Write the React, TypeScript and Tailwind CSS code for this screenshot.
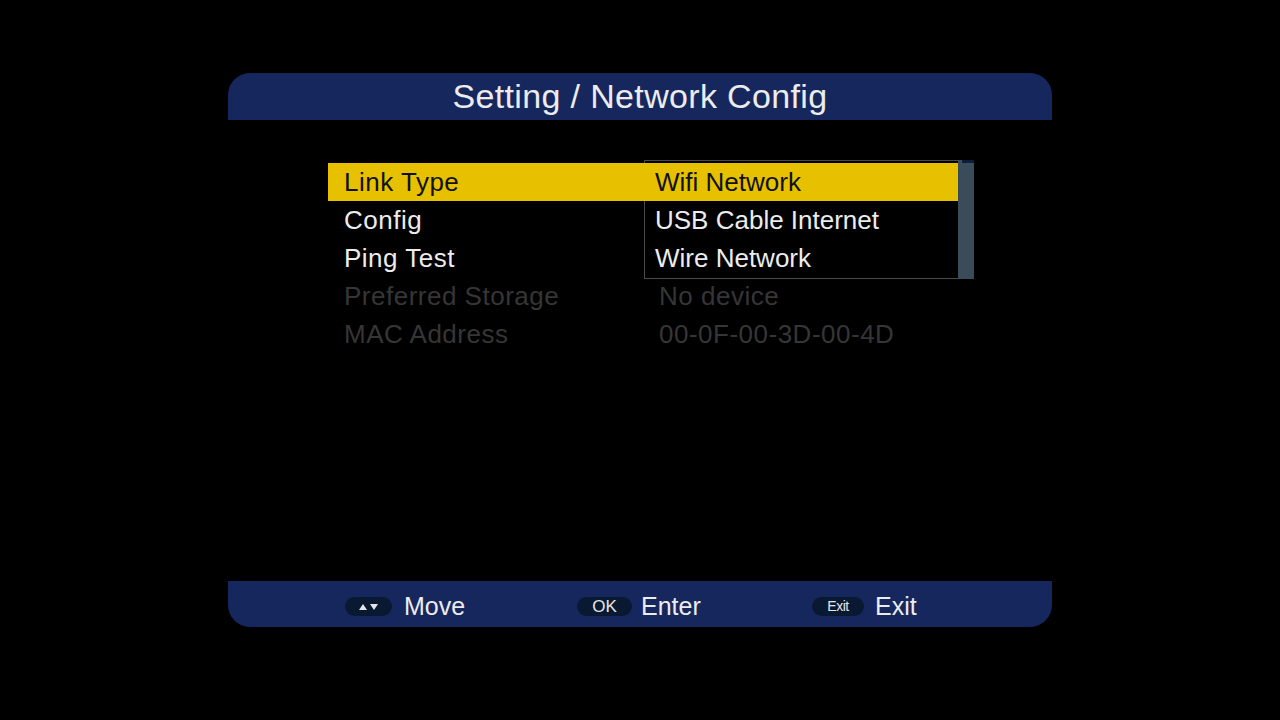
import React from "react";

interface MenuRow {
  label: string;
  value: string;
  disabled?: boolean;
  active?: boolean;
}

const rows: MenuRow[] = [
  { label: "Link Type", value: "", active: true },
  { label: "Config", value: "" },
  { label: "Ping Test", value: "" },
  { label: "Preferred Storage", value: "No device", disabled: true },
  { label: "MAC Address", value: "00-0F-00-3D-00-4D", disabled: true },
];

const options = ["Wifi Network", "USB Cable Internet", "Wire Network"];

const Key: React.FC<{ children: React.ReactNode; w: string }> = ({ children, w }) => (
  <span
    className={`flex h-[19px] items-center justify-center rounded-full bg-[#0a1932] text-[#e6e6e6] ${w}`}
  >
    {children}
  </span>
);

const App: React.FC = () => {
  return (
    <div className="flex h-[720px] w-full flex-col items-center bg-black font-['Liberation_Sans',Arial,sans-serif] pb-[93px]">
      <div className="flex w-[824px] flex-1 flex-col">
        {/* header */}
        <div className="mt-[73px] flex h-[47px] items-center justify-center rounded-t-[22px] bg-[#16275e] text-[34px] tracking-[0.35px] text-[#ececec]">
          Setting / Network Config
        </div>

        {/* menu */}
        <div className="relative ml-[100px] mt-[43px] w-[630px]">
          {rows.map((row) => (
            <div
              key={row.label}
              className={`flex h-[38px] items-center text-[26px] tracking-[0.5px] ${
                row.active
                  ? "bg-[#e7c100] text-[#111]"
                  : row.disabled
                    ? "text-[#363636]"
                    : "text-[#ececec]"
              }`}
            >
              <span className="w-[315px] pl-4">{row.label}</span>
              <span className="pl-[16px]">{row.value}</span>
            </div>
          ))}

          {/* dropdown list */}
          <div className="absolute left-[316px] top-[-3px] flex h-[119px] w-[330px]">
            <div className="flex w-[314px] flex-col border-b border-l border-t border-[#4a4a4a] bg-black pt-[2px]">
              {options.map((opt, i) => (
                <div
                  key={opt}
                  className={`flex h-[38px] items-center pl-[10px] text-[26px] ${
                    i === 0 ? "-ml-px bg-[#e7c100] pl-[11px] text-[#111]" : "text-[#ececec]"
                  }`}
                >
                  {opt}
                </div>
              ))}
            </div>
            <div className="flex w-[16px] flex-col bg-[#3a4b5a]">
              <div className="ml-[4px] h-[3px] bg-[#0e1d3a]" />
            </div>
          </div>
        </div>

        {/* footer */}
        <div className="mt-auto flex h-[46px] items-center rounded-b-[22px] bg-[#16275e] pl-[117px] pt-[5px] text-[25px] text-[#ececec]">
          <div className="flex w-[232px] items-center gap-3">
            <Key w="w-[47px]">
              <svg width="22" height="8" viewBox="0 0 22 8">
                <polygon points="1,7 5,1 9,7" fill="#e6e6e6" />
                <polygon points="12,1 20,1 16,7" fill="#e6e6e6" />
              </svg>
            </Key>
            <span>Move</span>
          </div>
          <div className="flex w-[235px] items-center gap-[9px]">
            <Key w="w-[55px] text-[17px]">OK</Key>
            <span>Enter</span>
          </div>
          <div className="flex items-center gap-[11px]">
            <Key w="w-[52px] text-[14px] tracking-[-0.5px]">Exit</Key>
            <span>Exit</span>
          </div>
        </div>
      </div>
    </div>
  );
};

export default App;
